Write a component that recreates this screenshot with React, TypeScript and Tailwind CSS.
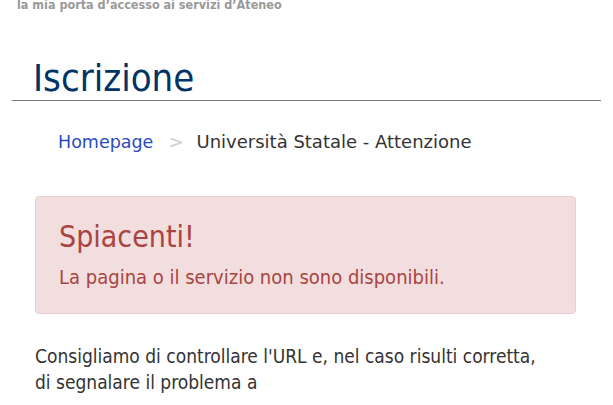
export default function App() {
  return (
    <div className="w-[613px] h-[405px] overflow-hidden bg-white" style={{ fontFamily: '"DejaVu Sans Condensed", "DejaVu Sans", Verdana, sans-serif' }}>
      <div className="pl-[17px] -mt-[2px] text-[12.5px] leading-[14px] font-bold text-[#999999]">
        la mia porta d&rsquo;accesso ai servizi d&rsquo;Ateneo
      </div>
      <div className="mx-[12px] mt-[44px] border-b border-[#777777] pl-[21px]">
        <h1 className="text-[38px] leading-[44px] text-[#003366] font-normal">Iscrizione</h1>
      </div>
      <div className="pl-[35px] pr-[37px]">
        <div
          className="mt-[28px] pl-[23px] flex items-center text-[18px] leading-[26px] text-[#333333]"
          style={{ fontFamily: '"DejaVu Sans", Verdana, sans-serif' }}
        >
          <span className="text-[17.5px] text-[#2a4bbf]">Homepage</span>
          <span className="ml-[15px] mr-[13px] text-[#cccccc]">&gt;</span>
          <span>Università Statale - Attenzione</span>
        </div>
        <div className="mt-[41px] rounded-[4px] border border-[#ebccd1] bg-[#f2dede] px-[23px] pt-[22px] pb-[23px] text-[#a94442]">
          <div className="text-[30px] leading-[36px]">Spiacenti!</div>
          <div className="mt-[9px] text-[20px] leading-[26px]">La pagina o il servizio non sono disponibili.</div>
        </div>
        <p className="mt-[29px] text-[19px] leading-[26px] text-[#333333]">
          Consigliamo di controllare l'URL e, nel caso risulti corretta,<br />di segnalare il problema a
        </p>
      </div>
    </div>
  );
}
